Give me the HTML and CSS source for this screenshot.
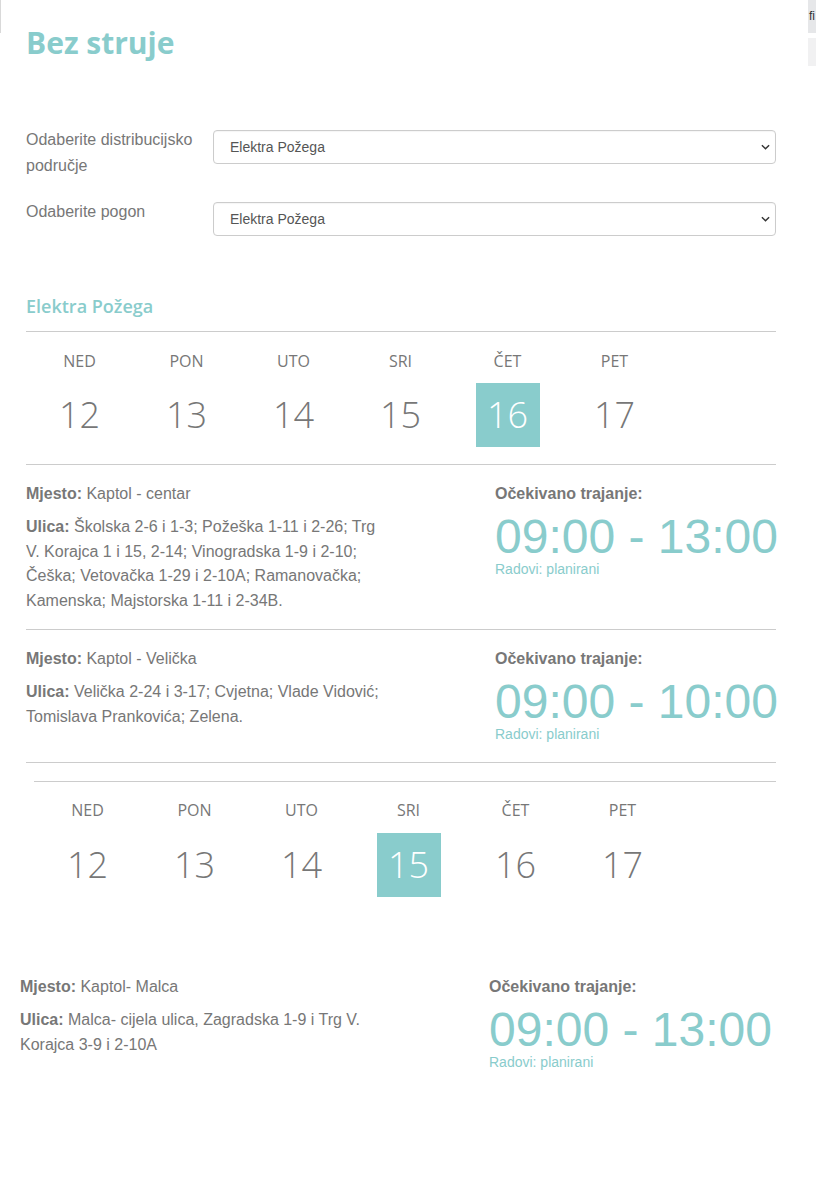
FILE: index.html
```html
<!DOCTYPE html>
<html lang="hr">
<head>
<meta charset="utf-8">
<title>Bez struje</title>
<link rel="stylesheet" href="styles.css">
</head>
<body>
<div class="edge-left"></div>
<div class="edge-right"><span class="edge-text">fi</span></div>
<div class="edge-right-2"></div>

<main class="page">
  <h1 class="title">Bez struje</h1>

  <form class="filters">
    <div class="field">
      <label class="field-label" for="podrucje">Odaberite distribucijsko područje</label>
      <div class="select-wrap">
        <select id="podrucje" class="select"><option>Elektra Požega</option></select>
        <svg class="chevron" viewBox="0 0 10 6" width="9" height="6"><path d="M1 1 L5 5 L9 1" fill="none" stroke="#333" stroke-width="1.6"/></svg>
      </div>
    </div>
    <div class="field field-second">
      <label class="field-label" for="pogon">Odaberite pogon</label>
      <div class="select-wrap">
        <select id="pogon" class="select"><option>Elektra Požega</option></select>
        <svg class="chevron" viewBox="0 0 10 6" width="9" height="6"><path d="M1 1 L5 5 L9 1" fill="none" stroke="#333" stroke-width="1.6"/></svg>
      </div>
    </div>
  </form>

  <section class="area">
    <h2 class="area-title">Elektra Požega</h2>

    <div class="week week-bordered">
      <div class="day"><span class="day-name">NED</span><span class="day-num">12</span></div>
      <div class="day"><span class="day-name">PON</span><span class="day-num">13</span></div>
      <div class="day"><span class="day-name">UTO</span><span class="day-num">14</span></div>
      <div class="day"><span class="day-name">SRI</span><span class="day-num">15</span></div>
      <div class="day"><span class="day-name">ČET</span><span class="day-num active">16</span></div>
      <div class="day"><span class="day-name">PET</span><span class="day-num">17</span></div>
    </div>

    <article class="outage">
      <div class="outage-info">
        <p class="place"><b>Mjesto:</b> Kaptol - centar</p>
        <p class="streets"><b>Ulica:</b> Školska 2-6 i 1-3; Požeška 1-11 i 2-26; Trg V. Korajca 1 i 15, 2-14; Vinogradska 1-9 i 2-10; Češka; Vetovačka 1-29 i 2-10A; Ramanovačka; Kamenska; Majstorska 1-11 i 2-34B.</p>
      </div>
      <div class="outage-time">
        <p class="time-label">Očekivano trajanje:</p>
        <p class="time">09:00 - 13:00</p>
        <p class="status">Radovi: planirani</p>
      </div>
    </article>

    <article class="outage">
      <div class="outage-info">
        <p class="place"><b>Mjesto:</b> Kaptol - Velička</p>
        <p class="streets"><b>Ulica:</b> Velička 2-24 i 3-17; Cvjetna; Vlade Vidović; Tomislava Prankovića; Zelena.</p>
      </div>
      <div class="outage-time">
        <p class="time-label">Očekivano trajanje:</p>
        <p class="time">09:00 - 10:00</p>
        <p class="status">Radovi: planirani</p>
      </div>
    </article>
  </section>

  <section class="area area-shifted">
    <div class="week week-top">
      <div class="day"><span class="day-name">NED</span><span class="day-num">12</span></div>
      <div class="day"><span class="day-name">PON</span><span class="day-num">13</span></div>
      <div class="day"><span class="day-name">UTO</span><span class="day-num">14</span></div>
      <div class="day"><span class="day-name">SRI</span><span class="day-num active">15</span></div>
      <div class="day"><span class="day-name">ČET</span><span class="day-num">16</span></div>
      <div class="day"><span class="day-name">PET</span><span class="day-num">17</span></div>
    </div>

    <article class="outage outage-plain">
      <div class="outage-info">
        <p class="place"><b>Mjesto:</b> Kaptol- Malca</p>
        <p class="streets"><b>Ulica:</b> Malca- cijela ulica, Zagradska 1-9 i Trg V. Korajca 3-9 i 2-10A</p>
      </div>
      <div class="outage-time">
        <p class="time-label">Očekivano trajanje:</p>
        <p class="time">09:00 - 13:00</p>
        <p class="status">Radovi: planirani</p>
      </div>
    </article>
  </section>
</main>
</body>
</html>
```

FILE: styles.css
```css
* { box-sizing: border-box; }

html, body {
  margin: 0;
  padding: 0;
  background: #fff;
}

body {
  font-family: "Liberation Sans", Arial, sans-serif;
  color: #777;
  position: relative;
  min-height: 1192px;
}

.edge-left {
  position: absolute;
  left: 0;
  top: 0;
  width: 1px;
  height: 33px;
  background: #d9d9d9;
}

.edge-right {
  position: absolute;
  right: 0;
  top: 0;
  width: 8px;
  height: 33px;
  background: #e6e7e9;
  overflow: hidden;
}

.edge-text {
  display: block;
  font-size: 12px;
  color: #333;
  margin-top: 9px;
  margin-left: 1px;
  line-height: 14px;
}

.edge-right-2 {
  position: absolute;
  right: 0;
  top: 38px;
  width: 8px;
  height: 28px;
  background: #f1f1f2;
}

.page {
  width: 750px;
  margin-left: 26px;
  padding-top: 25px;
}

.title {
  margin: 0;
  font-family: "Open Sans", sans-serif;
  font-weight: 700;
  font-size: 30px;
  line-height: 36px;
  color: #89cccc;
}

/* filters */
.filters {
  margin-top: 66px;
}

.field {
  display: flex;
  align-items: flex-start;
}

.field-second {
  margin-top: 20px;
}

.field-label {
  width: 187px;
  flex: none;
  font-size: 16px;
  line-height: 26px;
  color: #777;
  padding-right: 10px;
}

.select-wrap {
  position: relative;
  flex: 1;
  margin-top: 3px;
}

.select {
  display: block;
  width: 100%;
  height: 34px;
  padding: 0 30px 0 16px;
  border: 1px solid #ccc;
  border-radius: 4px;
  background: #fff;
  font-family: "Liberation Sans", Arial, sans-serif;
  font-size: 14px;
  color: #555;
  appearance: none;
  -webkit-appearance: none;
  box-shadow: inset 0 1px 1px rgba(0,0,0,0.04);
}

.chevron {
  position: absolute;
  right: 6px;
  top: 14px;
  pointer-events: none;
}

/* area */
.area-title {
  margin: 58px 0 13px;
  font-family: "Open Sans", sans-serif;
  font-weight: 600;
  font-size: 18px;
  line-height: 24px;
  color: #89cccc;
}

.week {
  display: grid;
  grid-template-columns: repeat(7, 107px);
  padding: 18px 0 17px;
  font-family: "Open Sans", sans-serif;
}

.week-bordered {
  border-top: 1px solid #ccc;
  border-bottom: 1px solid #ccc;
}

.week-top {
  border-top: 1px solid #ccc;
  padding-top: 17px;
  padding-bottom: 61px;
}

.day {
  display: flex;
  flex-direction: column;
  align-items: center;
}

.day-name {
  font-size: 16px;
  line-height: 22px;
  color: #777;
  font-weight: 400;
}

.day-num {
  margin-top: 11px;
  width: 64px;
  height: 64px;
  line-height: 64px;
  text-align: center;
  font-size: 36px;
  font-weight: 300;
  color: #777;
}

.day-num.active {
  background: #89cccc;
  color: #fff;
}

.week-top .day-num {
  margin-top: 12px;
}

/* outages */
.outage {
  display: grid;
  grid-template-columns: 469px 1fr;
  padding: 16px 0;
  border-bottom: 1px solid #ccc;
}

.outage-plain {
  border-bottom: 0;
  margin-left: -14px;
}

.outage-info {
  width: 356px;
}

.outage p {
  margin: 0;
}

.place,
.streets {
  font-size: 16px;
  color: #777;
}

.place {
  line-height: 25px;
  margin-bottom: 9px !important;
}

.streets {
  line-height: 24.6px;
}

.place b,
.streets b {
  font-weight: 700;
}

.time-label {
  font-size: 16px;
  line-height: 25px;
  font-weight: 700;
  color: #777;
}

.time {
  margin-top: 10px !important;
  font-size: 48px;
  line-height: 41px;
  color: #89cccc;
  white-space: nowrap;
}

.status {
  font-size: 14px;
  line-height: 24px;
  color: #89cccc;
}

.area-shifted {
  margin-top: 18px;
  margin-left: 8px;
}
```
